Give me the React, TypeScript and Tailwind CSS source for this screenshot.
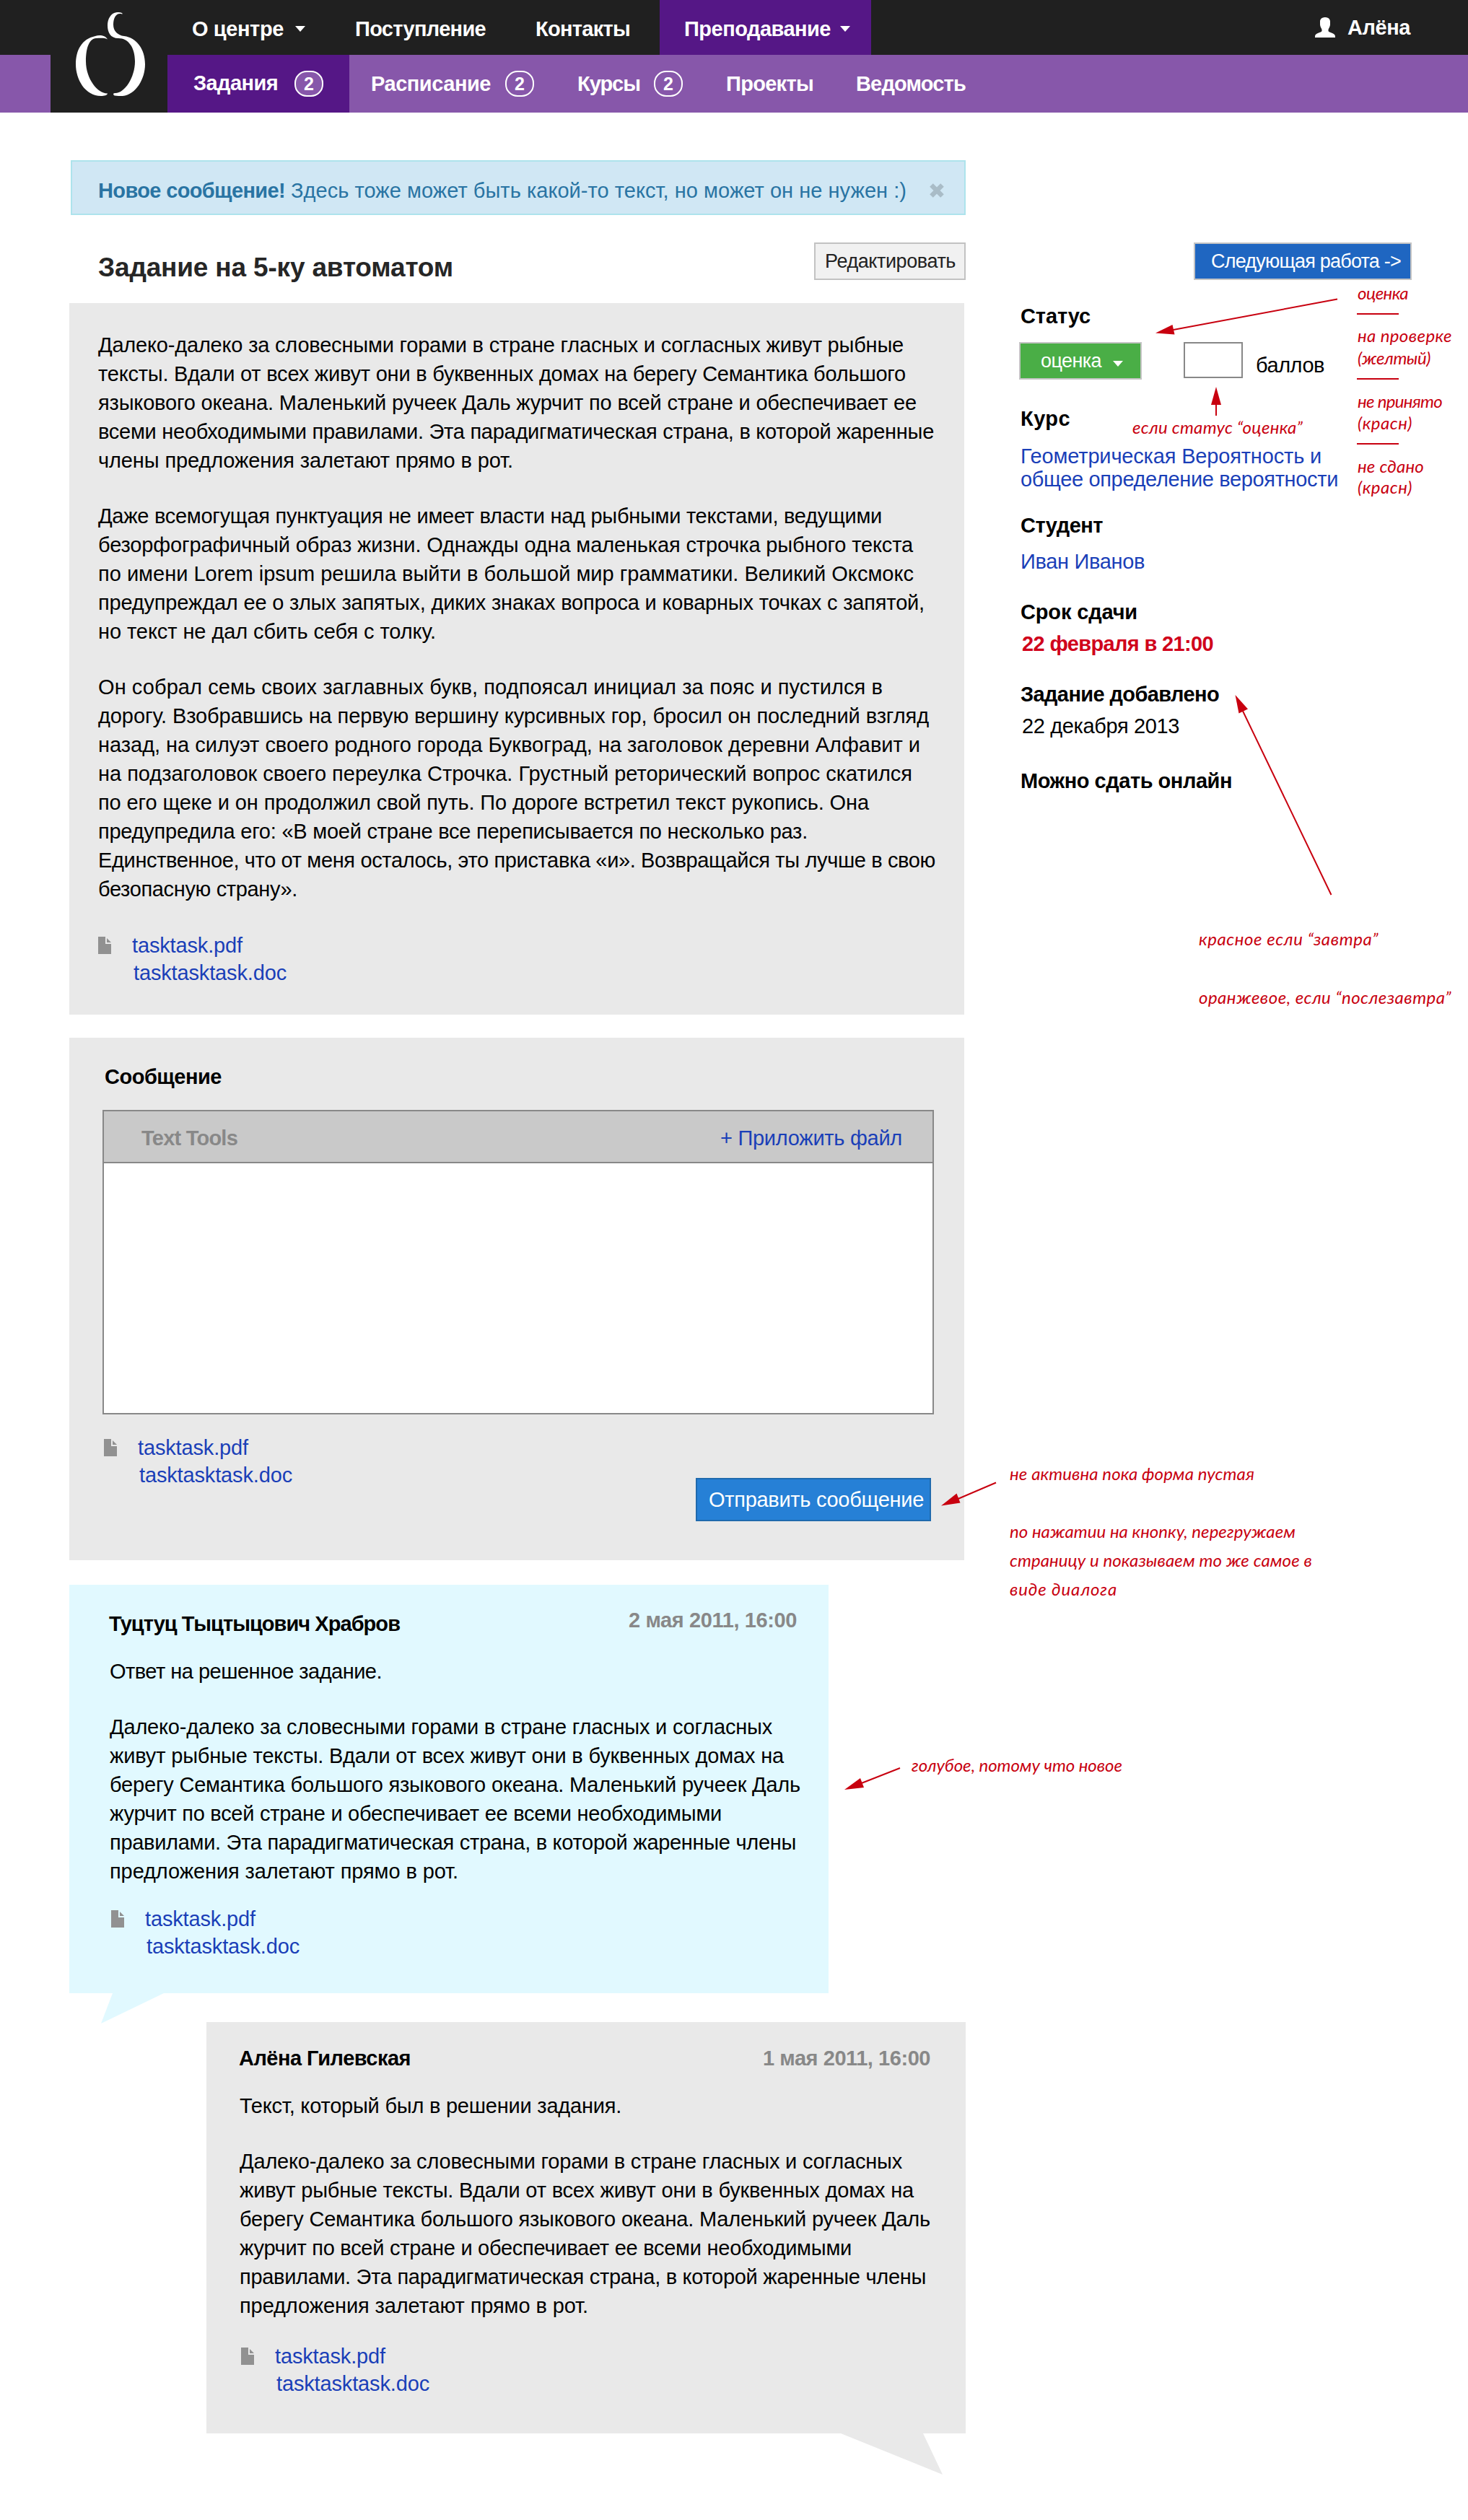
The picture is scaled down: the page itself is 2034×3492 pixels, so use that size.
import { useLayoutEffect, useRef } from "react";
import type { ReactNode } from "react";

/* A single line of text, tracked so that it fills exactly `w` pixels. */
function Line({ w, className = "", children }: { w: number; className?: string; children: string }) {
  const ref = useRef<HTMLSpanElement>(null);
  useLayoutEffect(() => {
    const el = ref.current;
    if (!el) return;
    el.style.letterSpacing = "0px";
    const natural = el.getBoundingClientRect().width;
    el.style.letterSpacing = `${(w - natural) / children.length}px`;
  }, [w, children]);
  return (
    <span ref={ref} className={`inline-block whitespace-pre pl-px ${className}`}>
      {children}
    </span>
  );
}

type Row = [string, number];

function Paragraph({ rows }: { rows: Row[] }) {
  return (
    <p className="flex flex-col items-start">
      {rows.map(([text, w]) => (
        <Line key={text} w={w}>
          {text}
        </Line>
      ))}
    </p>
  );
}

function Caret({ className = "" }: { className?: string }) {
  return (
    <svg className={`h-[8px] w-[14px] ${className}`} viewBox="0 0 14 8" fill="currentColor">
      <path d="M0 0H14L7 8Z" />
    </svg>
  );
}

function Count({ className = "" }: { className?: string }) {
  return (
    <span
      className={`flex h-9 w-10 items-center justify-center rounded-[17px] border-2 border-white bg-[#8757aa] text-[25px] font-bold leading-8 ${className}`}
    >
      2
    </span>
  );
}

function FileIcon() {
  return (
    <svg className="mt-[7px] h-6 w-[18px]" viewBox="0 0 18 24" fill="#919191">
      <path d="M0 0H10V10H18V24H0Z" />
      <path d="M12 2L18 8H12Z" />
    </svg>
  );
}

function Files() {
  return (
    <div className="flex items-start leading-[38px] text-[#1a3fb8]">
      <FileIcon />
      <div className="ml-7 flex flex-col items-start">
        <Line w={154}>tasktask.pdf</Line>
        <Line w={213} className="ml-[2px]">
          tasktasktask.doc
        </Line>
      </div>
    </div>
  );
}

function Logo() {
  return (
    <div className="absolute left-[70px] top-0 h-[156px] w-[162px] bg-[#202020]">
      <svg className="h-full w-full" viewBox="70 0 162 156" fill="#fff">
        <path d="M149 54.500C146 49 138 48 132 50C113 54 105 70 105 89C105 110 118 133 140 133C144 133 149 132 149 129.500C136 130 119 110 119 85C119 65 124 54 133 53C139 53 144 52 149 54.500Z" />
        <path d="M170 19C168 17 165 17 162 17C153 18 149 27 149 35C149 45 153 53 164 53C178 53 187 66 187 85C187 108 172 130 159 129C156 129 157 132 159 132.500C162 133 166 133 170 133C188 131 201 110 201 89C201 68 189 52 172 50C163 49 157 43 157 34C157 26 160 19 166 19C168 19 169 20 170 19Z" />
      </svg>
    </div>
  );
}

function Header() {
  return (
    <header className="relative font-bold text-white">
      <div className="flex h-[76px] items-center bg-[#202020] pl-[265px]">
        <div className="flex items-center pt-1">
          <Line w={128}>О центре</Line>
          <Caret className="ml-4" />
        </div>
        <Line w={182} className="ml-[68px] pt-1">
          Поступление
        </Line>
        <Line w={132} className="ml-[68px] pt-1">
          Контакты
        </Line>
        <div className="ml-[41px] flex h-[76px] w-[293px] items-center bg-[#551786] pl-[33px]">
          <Line w={204} className="pt-1">
            Преподавание
          </Line>
          <Caret className="ml-[13px] mt-1" />
        </div>
        <div className="ml-[615px] flex items-center">
          <svg className="h-7 w-7" viewBox="0 0 28 28" fill="#fff">
            <path d="M14 0C18 0 21 2 21 6V10C21 13 19 15 18.500 17V19C19 21 28 22 28 26V28H0V26C0 22 9 21 9.500 19V17C9 15 7 13 7 10V6C7 2 10 0 14 0Z" />
          </svg>
          <Line w={88} className="ml-4">
            Алёна
          </Line>
        </div>
      </div>
      <div className="flex h-20 items-center bg-[#8757aa] pl-[232px]">
        <div className="flex h-20 w-[252px] items-center bg-[#551786] pl-[35px]">
          <Line w={118} className="pb-[3px]">
            Задания
          </Line>
          <Count className="ml-[23px]" />
        </div>
        <Line w={167} className="ml-[29px]">
          Расписание
        </Line>
        <Count className="ml-5" />
        <Line w={88} className="ml-[59px]">
          Курсы
        </Line>
        <Count className="ml-[19px]" />
        <Line w={122} className="ml-[59px]">
          Проекты
        </Line>
        <Line w={153} className="ml-[58px]">
          Ведомость
        </Line>
      </div>
      <Logo />
    </header>
  );
}

const intro: Row[] = [
  ["Далеко-далеко за словесными горами в стране гласных и согласных живут рыбные", 1117],
  ["тексты. Вдали от всех живут они в буквенных домах на берегу Семантика большого", 1120],
  ["языкового океана. Маленький ручеек Даль журчит по всей стране и обеспечивает ее", 1135],
  ["всеми необходимыми правилами. Эта парадигматическая страна, в которой жаренные", 1159],
  ["члены предложения залетают прямо в рот.", 576],
];

const middle: Row[] = [
  ["Даже всемогущая пунктуация не имеет власти над рыбными текстами, ведущими", 1087],
  ["безорфографичный образ жизни. Однажды одна маленькая строчка рыбного текста", 1130],
  ["по имени Lorem ipsum решила выйти в большой мир грамматики. Великий Оксмокс", 1131],
  ["предупреждал ее о злых запятых, диких знаках вопроса и коварных точках с запятой,", 1146],
  ["но текст не дал сбить себя с толку.", 469],
];

const ending: Row[] = [
  ["Он собрал семь своих заглавных букв, подпоясал инициал за пояс и пустился в", 1088],
  ["дорогу. Взобравшись на первую вершину курсивных гор, бросил он последний взгляд", 1152],
  ["назад, на силуэт своего родного города Буквоград, на заголовок деревни Алфавит и", 1140],
  ["на подзаголовок своего переулка Строчка. Грустный реторический вопрос скатился", 1129],
  ["по его щеке и он продолжил свой путь. По дороге встретил текст рукопись. Она", 1069],
  ["предупредила его: «В моей стране все переписывается по несколько раз.", 984],
  ["Единственное, что от меня осталось, это приставка «и». Возвращайся ты лучше в свою", 1161],
  ["безопасную страну».", 277],
];

const reply: Row[] = [
  ["Далеко-далеко за словесными горами в стране гласных и согласных", 919],
  ["живут рыбные тексты. Вдали от всех живут они в буквенных домах на", 935],
  ["берегу Семантика большого языкового океана. Маленький ручеек Даль", 958],
  ["журчит по всей стране и обеспечивает ее всеми необходимыми", 849],
  ["правилами. Эта парадигматическая страна, в которой жаренные члены", 952],
  ["предложения залетают прямо в рот.", 484],
];

function Bubble({
  className,
  author,
  date,
  lead,
  filesClass,
  tail,
}: {
  className: string;
  author: ReactNode;
  date: ReactNode;
  lead: ReactNode;
  filesClass: string;
  tail: ReactNode;
}) {
  return (
    <article className={`relative w-[1052px] ${className}`}>
      <div className="flex items-start justify-between font-bold">
        {author}
        {date}
      </div>
      <div className="mt-[26px] pl-px">{lead}</div>
      <div className="mt-[37px] pl-px">
        <Paragraph rows={reply} />
      </div>
      <div className={filesClass}>
        <Files />
      </div>
      {tail}
    </article>
  );
}

function MainColumn() {
  return (
    <main className="w-[1242px] pt-[66px]">
      <div className="ml-[2px] flex h-[76px] w-[1240px] items-center border-2 border-[#ade3ec] bg-[#d0e7f4] pl-[35px] text-[#2974a3]">
        <Line w={260} className="pt-[7px] font-bold">
          Новое сообщение!
        </Line>
        <Line w={854} className="ml-[7px] pt-[7px]">
          Здесь тоже может быть какой-то текст, но может он не нужен :)
        </Line>
        <svg className="ml-8 mt-2 h-5 w-5" viewBox="0 0 20 20" stroke="#a9bcc7" strokeWidth="6.500">
          <path d="M2.500 2.500L17.500 17.500M17.500 2.500L2.500 17.500" />
        </svg>
      </div>

      <div className="flex h-[122px] items-start justify-between">
        <h1 className="pl-[39px] pt-[51px] text-[37px] font-bold leading-[44px] text-[#262626]">
          <Line w={493}>Задание на 5-ку автоматом</Line>
        </h1>
        <button className="mt-[38px] flex h-[52px] w-[210px] justify-center border-2 border-[#c2c2c2] bg-[#f1f1f1] text-[27px] leading-[48px] text-[#222]">
          <Line w={182}>Редактировать</Line>
        </button>
      </div>

      <section className="flex h-[986px] w-[1240px] flex-col gap-[37px] bg-[#e9e9e9] pl-[39px] pt-[38px]">
        <Paragraph rows={intro} />
        <Paragraph rows={middle} />
        <Paragraph rows={ending} />
        <div className="mt-[2px] pl-px">
          <Files />
        </div>
      </section>

      <section className="mt-8 h-[724px] w-[1240px] bg-[#e9e9e9] pl-[46px] pt-[34px]">
        <h2 className="pl-[2px] font-bold">
          <Line w={163}>Сообщение</Line>
        </h2>
        <div className="mt-[26px] h-[422px] w-[1152px] border-2 border-[#888] bg-white">
          <div className="flex h-[72px] items-center justify-between border-b-2 border-[#888] bg-[#c9c9c9] pl-[51px] pr-[42px] pt-1">
            <Line w={134} className="font-bold text-[#888]">
              Text Tools
            </Line>
            <Line w={253} className="text-[#1a3fb8]">
              + Приложить файл
            </Line>
          </div>
        </div>
        <div className="flex items-start justify-between pl-[2px] pr-[46px] pt-[27px]">
          <Files />
          <button className="mt-[61px] h-[60px] w-[326px] border-2 border-[#1f6aae] bg-[#2680d6] pl-[15px] text-left leading-[57px] text-white">
            <Line w={299}>Отправить сообщение</Line>
          </button>
        </div>
      </section>

      <Bubble
        className="mt-[34px] h-[566px] bg-[#e1f9ff] pl-[54px] pr-[44px] pt-[34px]"
        author={<Line w={404}>Туцтуц Тыцтыцович Храбров</Line>}
        date={
          <Line w={234} className="-mt-[5px] text-[#888]">
            2 мая 2011, 16:00
          </Line>
        }
        lead={<Line w={378}>Ответ на решенное задание.</Line>}
        filesClass="mt-[27px] pl-1"
        tail={
          <svg className="absolute left-[44px] top-[566px] h-[42px] w-[87px]" viewBox="0 0 87 42" fill="#e1f9ff">
            <path d="M16 0H87L0 42Z" />
          </svg>
        }
      />

      <Bubble
        className="ml-[190px] mt-10 h-[570px] bg-[#e9e9e9] pl-11 pr-[49px] pt-[30px]"
        author={<Line w={239}>Алёна Гилевская</Line>}
        date={
          <Line w={233} className="text-[#888]">
            1 мая 2011, 16:00
          </Line>
        }
        lead={<Line w={530}>Текст, который был в решении задания.</Line>}
        filesClass="mt-[31px] pl-1"
        tail={
          <svg className="absolute left-[879px] top-[570px] h-[57px] w-[141px]" viewBox="0 0 141 57" fill="#e9e9e9">
            <path d="M0 0H114L141 57Z" />
          </svg>
        }
      />
    </main>
  );
}

function Sidebar() {
  return (
    <aside className="ml-[74px] flex w-[548px] flex-col items-start pt-[180px]">
      <button className="ml-[242px] flex h-[52px] w-[302px] border-2 border-[#c4c4c4] bg-[#1f66c1] pl-[21px] text-[27px] leading-[48px] text-white">
        <Line w={264}>{"Следующая работа ->"}</Line>
      </button>
      <Line w={98} className="ml-px mt-[30px] font-bold">
        Статус
      </Line>
      <div className="mt-4 flex h-[52px] items-start">
        <button className="flex h-[52px] w-[170px] items-center border-2 border-[#c4c4c4] bg-[#4aae46] pl-[27px] text-[27px] text-white">
          <Line w={85}>оценка</Line>
          <Caret className="ml-[16px] mt-2" />
        </button>
        <div className="ml-[58px] h-[50px] w-[82px] border-2 border-[#888] bg-white" />
        <Line w={96} className="ml-[17px] mt-3">
          баллов
        </Line>
      </div>
      <Line w={70} className="ml-px mt-[34px] font-bold">
        Курс
      </Line>
      <div className="ml-px mt-4 flex flex-col items-start leading-8 text-[#1a3fb8]">
        <Line w={418}>Геометрическая Вероятность и</Line>
        <Line w={441}>общее определение вероятности</Line>
      </div>
      <Line w={115} className="ml-px mt-7 font-bold">
        Студент
      </Line>
      <Line w={173} className="ml-px mt-[10px] text-[#1a3fb8]">
        Иван Иванов
      </Line>
      <Line w={163} className="ml-px mt-[30px] font-bold">
        Срок сдачи
      </Line>
      <Line w={266} className="ml-[3px] mt-1 font-bold text-[#d0021b]">
        22 февраля в 21:00
      </Line>
      <Line w={276} className="ml-px mt-[30px] font-bold">
        Задание добавлено
      </Line>
      <Line w={219} className="ml-[3px] mt-1">
        22 декабря 2013
      </Line>
      <Line w={294} className="ml-px mt-9 font-bold">
        Можно сдать онлайн
      </Line>
    </aside>
  );
}

function Note({ w, className, children }: { w: number; className: string; children: string }) {
  return (
    <div className={`absolute ${className}`}>
      <Line w={w}>{children}</Line>
    </div>
  );
}

/* Red hand-written remarks pinned over the page. */
function Notes() {
  return (
    <div className="font-[Lato,sans-serif] text-[24px] font-normal italic leading-[30px] text-[#c8000f]">
      <Note w={71} className="left-[1880px] top-[391px]">оценка</Note>
      <div className="absolute left-[1880px] top-[434px] h-[2px] w-[58px] bg-[#c8000f]" />
      <Note w={132} className="left-[1880px] top-[450px]">на проверке</Note>
      <Note w={102} className="left-[1880px] top-[481px]">(желтый)</Note>
      <div className="absolute left-[1880px] top-[524px] h-[2px] w-[58px] bg-[#c8000f]" />
      <Note w={118} className="left-[1880px] top-[541px]">не принято</Note>
      <Note w={77} className="left-[1880px] top-[571px]">(красн)</Note>
      <div className="absolute left-[1880px] top-[614px] h-[2px] w-[58px] bg-[#c8000f]" />
      <Note w={93} className="left-[1880px] top-[631px]">не сдано</Note>
      <Note w={77} className="left-[1880px] top-[660px]">(красн)</Note>
      <Note w={237} className="left-[1568px] top-[577px]">если статус “оценка”</Note>
      <Note w={250} className="left-[1660px] top-[1286px]">красное если “завтра”</Note>
      <Note w={351} className="left-[1660px] top-[1367px]">оранжевое, если “послезавтра”</Note>
      <Note w={340} className="left-[1398px] top-[2027px]">не активна пока форма пустая</Note>
      <Note w={397} className="left-[1398px] top-[2107px]">по нажатии на кнопку, перегружаем</Note>
      <Note w={420} className="left-[1398px] top-[2147px]">страницу и показываем то же самое в</Note>
      <Note w={150} className="left-[1398px] top-[2187px]">виде диалога</Note>
      <Note w={293} className="left-[1262px] top-[2431px]">голубое, потому что новое</Note>
      <svg
        className="pointer-events-none absolute left-0 top-0 h-[3492px] w-[2034px]"
        viewBox="0 0 2034 3492"
        fill="#c8000f"
        stroke="none"
      >
        <path d="M1853 414.500L1615 459M1685 576V550M1844.500 1240L1718 977M1380 2054.500L1318 2081M1247 2450L1186 2474" stroke="#c8000f" strokeWidth="2" />
        <path d="M1601 461.500L1624.500 450L1627.500 463.500Z" />
        <path d="M1685 536L1678 561H1692Z" />
        <path d="M1711.500 963L1716.500 988.500L1729 982.500Z" />
        <path d="M1304 2086.500L1325.500 2069.500L1330.500 2082.500Z" />
        <path d="M1170 2480L1192 2464L1197 2477Z" />
      </svg>
    </div>
  );
}

export default function App() {
  return (
    <div className="relative h-[3492px] w-[2034px] overflow-hidden bg-white font-['Liberation_Sans',Arial,sans-serif] text-[29px] leading-10 text-black">
      <Header />
      <div className="flex items-start pl-[96px]">
        <MainColumn />
        <Sidebar />
      </div>
      <Notes />
    </div>
  );
}
